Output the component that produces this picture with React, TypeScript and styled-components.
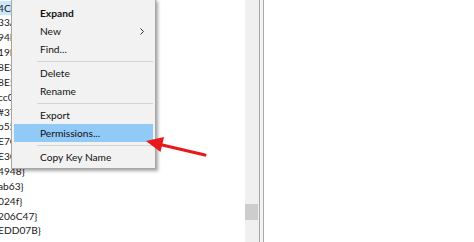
import React from "react";
import styled, { createGlobalStyle } from "styled-components";

const GlobalStyle = createGlobalStyle`
  html, body {
    margin: 0;
    padding: 0;
    background: #ffffff;
    overflow: hidden;
  }
  body {
    font-family: Lato, "Noto Sans", sans-serif;
  }
`;

const Window = styled.div`
  display: flex;
  width: 474px;
  height: 242px;
  overflow: hidden;
  background: #ffffff;
`;

const TreePane = styled.div`
  position: relative;
  width: 245px;
  flex-shrink: 0;
  overflow: hidden;
  padding-top: 0.5px;
`;

const TreeRow = styled.div<{ $selected?: boolean }>`
  height: 14.87px;
  line-height: 14.87px;
  font-size: 10.2px;
  color: #1a1a1a;
  white-space: nowrap;
  width: ${(p) => (p.$selected ? "14px" : "auto")};
  background: ${(p) => (p.$selected ? "#cce8ff" : "transparent")};
  text-indent: -2px;
`;

const Scrollbar = styled.div`
  width: 14px;
  flex-shrink: 0;
  background: #f0f0f0;
  display: flex;
  flex-direction: column;
`;

const Thumb = styled.div`
  margin-top: 204px;
  height: 16px;
  width: 13px;
  background: #cdcdcd;
`;

const Splitter = styled.div`
  width: 3px;
  flex-shrink: 0;
  background: #f4f4f4;
  border-left: 1px solid #a9a9a9;
  border-right: 1px solid #a9a9a9;
`;

const ValuePane = styled.div`
  flex: 1;
  background: #ffffff;
`;

const Menu = styled.div`
  position: absolute;
  left: 11px;
  top: -1px;
  width: 139px;
  padding: 4px 2px 2px 2px;
  background: #f2f2f2;
  border: 1px solid #a7a7a7;
  box-shadow: 2px 2px 3px rgba(0, 0, 0, 0.35);
  font-size: 10.2px;
  color: #111111;
`;

const MenuItem = styled.div<{ $active?: boolean; $bold?: boolean }>`
  display: flex;
  align-items: center;
  justify-content: space-between;
  height: 18px;
  padding: 0 9px 0 26px;
  font-weight: ${(p) => (p.$bold ? 700 : 400)};
  background: ${(p) => (p.$active ? "#91c9f7" : "transparent")};
`;

const Separator = styled.div`
  height: 6px;
  margin-left: 23px;
  display: flex;
  align-items: center;
  &::after {
    content: "";
    display: block;
    width: 100%;
    height: 1px;
    background: #d4d4d4;
  }
`;

const Arrow = styled.svg`
  position: absolute;
  left: 0;
  top: 0;
  pointer-events: none;
`;

const rows = [
  "4C0}",
  "33A1}",
  "94F2}",
  "19D7}",
  "8E3B}",
  "8E51}",
  "cc07}",
  "#37a}",
  "b55e}",
  "E7C2}",
  "E3C0}",
  "4948}",
  "ab63}",
  "024f}",
  "206C47}",
  "EDD07B}",
];

const SubmenuChevron = () => (
  <svg width="4" height="7" viewBox="0 0 4 7">
    <path d="M0.5 0.5 L3.5 3.5 L0.5 6.5" fill="none" stroke="#333" strokeWidth="1" />
  </svg>
);

export default function App() {
  return (
    <>
      <GlobalStyle />
      <Window>
        <TreePane>
          {rows.map((r, i) => (
            <TreeRow key={i} $selected={i === 0}>
              {r}
            </TreeRow>
          ))}
          <Menu>
            <MenuItem $bold>Expand</MenuItem>
            <MenuItem>
              New <SubmenuChevron />
            </MenuItem>
            <MenuItem>Find...</MenuItem>
            <Separator />
            <MenuItem>Delete</MenuItem>
            <MenuItem>Rename</MenuItem>
            <Separator />
            <MenuItem>Export</MenuItem>
            <MenuItem $active>Permissions...</MenuItem>
            <Separator />
            <MenuItem>Copy Key Name</MenuItem>
          </Menu>
          <Arrow width="245" height="242" viewBox="0 0 245 242">
            <line x1="205" y1="155" x2="158" y2="144" stroke="#e8191c" strokeWidth="3.2" strokeLinecap="round" />
            <polygon points="146,141 164,137 160.5,152" fill="#e8191c" />
          </Arrow>
        </TreePane>
        <Scrollbar>
          <Thumb />
        </Scrollbar>
        <Splitter />
        <ValuePane />
      </Window>
    </>
  );
}
